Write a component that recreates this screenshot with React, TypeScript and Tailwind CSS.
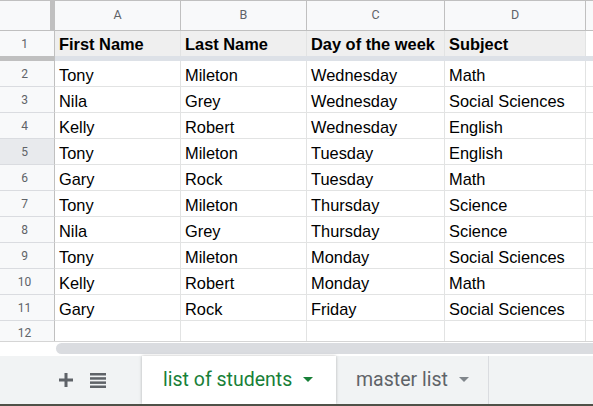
import React from 'react';

const columns = [
  { key: 'A', w: 'w-[126px]' },
  { key: 'B', w: 'w-[126px]' },
  { key: 'C', w: 'w-[138px]' },
  { key: 'D', w: 'w-[141px]' },
];

const header = ['First Name', 'Last Name', 'Day of the week', 'Subject'];

const students = [
  ['Tony', 'Mileton', 'Wednesday', 'Math'],
  ['Nila', 'Grey', 'Wednesday', 'Social Sciences'],
  ['Kelly', 'Robert', 'Wednesday', 'English'],
  ['Tony', 'Mileton', 'Tuesday', 'English'],
  ['Gary', 'Rock', 'Tuesday', 'Math'],
  ['Tony', 'Mileton', 'Thursday', 'Science'],
  ['Nila', 'Grey', 'Thursday', 'Science'],
  ['Tony', 'Mileton', 'Monday', 'Social Sciences'],
  ['Kelly', 'Robert', 'Monday', 'Math'],
  ['Gary', 'Rock', 'Friday', 'Social Sciences'],
];

function Caret({ color }: { color: string }) {
  return (
    <svg width="10" height="5" viewBox="0 0 10 5" className="ml-[11px]">
      <path d="M0 0 L10 0 L5 5 Z" fill={color} />
    </svg>
  );
}

function DataRow({ num, cells, selected }: { num: number; cells: string[]; selected?: boolean }) {
  return (
    <div className="flex h-[26px]">
      <div
        className={`w-[55px] shrink-0 border-r border-b border-r-[#c0c0c0] border-b-[#dadce0] pr-[5px] flex items-center justify-center text-[12px] text-[#5f6368] font-['Roboto',sans-serif] ${
          selected ? 'bg-[#e8eaed]' : 'bg-[#f8f9fa]'
        }`}
      >
        {num}
      </div>
      {columns.map((c, i) => (
        <div
          key={c.key}
          className={`${c.w} shrink-0 border-r border-b border-[#e2e3e3] pl-[4px] pt-[4px] flex items-center text-[16.4px] text-black whitespace-nowrap overflow-hidden`}
        >
          {cells[i]}
        </div>
      ))}
      <div className="flex-1 border-b border-[#e2e3e3]" />
    </div>
  );
}

export default function App() {
  return (
    <div className="w-[593px] h-[406px] overflow-hidden bg-white flex flex-col font-['Liberation_Sans',Arial,sans-serif]">
      {/* column letters */}
      <div className="flex h-[31px] shrink-0 border-t border-b border-[#c0c0c0] bg-[#f8f9fa]">
        <div className="w-[55px] shrink-0 flex">
          <div className="w-[50px]" />
          <div className="w-[5px] bg-[#c0c0c0]" />
        </div>
        {columns.map((c) => (
          <div
            key={c.key}
            className={`${c.w} shrink-0 border-r border-[#c0c0c0] flex items-center justify-center text-[12.5px] text-[#5f6368] font-['Roboto',sans-serif]`}
          >
            {c.key}
          </div>
        ))}
        <div className="flex-1" />
      </div>

      {/* frozen header row */}
      <div className="flex h-[25px] shrink-0">
        <div className="w-[55px] shrink-0 border-r border-[#c0c0c0] bg-[#f8f9fa] pr-[5px] flex items-center justify-center text-[12px] text-[#5f6368] font-['Roboto',sans-serif]">
          1
        </div>
        {columns.map((c, i) => (
          <div
            key={c.key}
            className={`${c.w} shrink-0 border-r border-[#e2e3e3] bg-[#efefef] pl-[4px] pt-[2px] flex items-center text-[16.4px] font-bold text-black whitespace-nowrap`}
          >
            {header[i]}
          </div>
        ))}
        <div className="flex-1" />
      </div>

      {/* freeze line */}
      <div className="flex h-[5px] shrink-0">
        <div className="w-[55px] bg-[#c0c0c0]" />
        <div className="flex-1 bg-[#dde1e7]" />
      </div>

      {students.map((s, i) => (
        <DataRow key={i} num={i + 2} cells={s} selected={i + 2 === 5} />
      ))}

      {/* partial row 12 */}
      <div className="flex h-[20px] shrink-0">
        <div className="w-[55px] shrink-0 border-r border-[#c0c0c0] bg-[#f8f9fa] pr-[5px] pt-[3px] flex items-center justify-center text-[12px] text-[#5f6368] font-['Roboto',sans-serif]">
          12
        </div>
        {columns.map((c) => (
          <div key={c.key} className={`${c.w} shrink-0 border-r border-[#e2e3e3]`} />
        ))}
        <div className="flex-1" />
      </div>

      {/* horizontal scrollbar */}
      <div className="h-[15px] shrink-0 border-t border-[#d5d5d5] bg-white pl-[56px] pt-[1px]">
        <div className="h-[11px] rounded-l-full bg-[#dadce0]" />
      </div>

      {/* sheet tabs */}
      <div className="flex h-[48px] shrink-0 bg-[#f1f3f4] font-['Roboto',sans-serif]">
        <div className="w-[142px] shrink-0 flex items-center pl-[59px] gap-[17px]">
          <svg width="14" height="14" viewBox="0 0 14 14">
            <rect x="5.5" y="0" width="3" height="14" fill="#5f6368" />
            <rect x="0" y="5.5" width="14" height="3" fill="#5f6368" />
          </svg>
          <svg width="16" height="15" viewBox="0 0 16 15">
            <rect x="0" y="0" width="16" height="2.5" fill="#5f6368" />
            <rect x="0" y="4.2" width="16" height="2.5" fill="#5f6368" />
            <rect x="0" y="8.4" width="16" height="2.5" fill="#5f6368" />
            <rect x="0" y="12.5" width="16" height="2.5" fill="#5f6368" />
          </svg>
        </div>
        <div className="w-[194px] shrink-0 bg-white shadow-[0_0_3px_rgba(60,64,67,0.35)] flex items-center pl-[21px] pb-[1px] text-[19.5px] text-[#188038]">
          list of students
          <Caret color="#188038" />
        </div>
        <div className="w-[153px] shrink-0 border-r border-[#dadce0] flex items-center pl-[20px] pb-[1px] text-[19.5px] text-[#5f6368]">
          master list
          <Caret color="#80868b" />
        </div>
        <div className="flex-1" />
      </div>
      <div className="h-[2px] shrink-0 bg-[#4f5148]" />
    </div>
  );
}
